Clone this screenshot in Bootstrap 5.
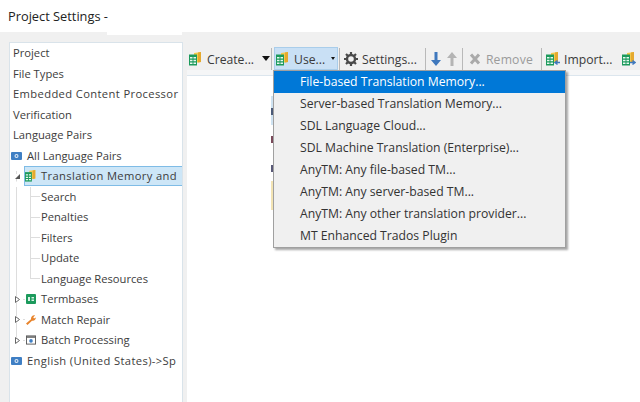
<!DOCTYPE html>
<html>
<head>
<meta charset="utf-8">
<meta name="viewport" content="width=device-width, initial-scale=1">
<link href="https://cdn.jsdelivr.net/npm/bootstrap@5.3.3/dist/css/bootstrap.min.css" rel="stylesheet" crossorigin="anonymous">
<script src="https://cdn.jsdelivr.net/npm/bootstrap@5.3.3/dist/js/bootstrap.bundle.min.js" crossorigin="anonymous"></script>
<style>
html, body { height: 100%; }
body { background: #f0f0f0; font-family: "Open Sans", "Noto Sans", sans-serif; font-size: 12.2px; color: #333; overflow: hidden; }
.title-bar { height: 32px; background: #fff; padding-left: 8px; font-size: 12.8px; line-height: 33px; color: #222; }
.title-tab { height: 3px; width: 75px; margin-left: 107px; background: #fff; }
.main-area { height: 367px; padding: 7px 0 0 9px; }
.tree-panel { width: 174px; flex: none; height: 100%; background: #fff; border: 1px solid #d9e3ea; border-bottom: 0; overflow: hidden; white-space: nowrap; font-size: 11.2px; }
.tree-row { height: 20.53px; line-height: 20.5px; display: flex; align-items: center; color: #3c3c3c; }
.wide-text { letter-spacing: .37px; }
.lv0 { padding-left: 3px; }
.lv0i { padding-left: 1px; }
.lv0i svg { margin-right: 5px; }
.lv1 { padding-left: 1px; background: linear-gradient(#ddd,#ddd) 6px 0/1px 100% no-repeat, linear-gradient(#ddd,#ddd) 12px 50%/3px 1px no-repeat; }
.lv1-end { background: linear-gradient(#ddd,#ddd) 6px 0/1px 50% no-repeat, linear-gradient(#ddd,#ddd) 12px 50%/3px 1px no-repeat; }
.lv1-sel { padding-left: 1px; background: linear-gradient(#ddd,#ddd) 6px 50%/1px 50% no-repeat; }
.lv2 { padding-left: 31px; background: linear-gradient(#ddd,#ddd) 6px 0/1px 100% no-repeat, linear-gradient(#ddd,#ddd) 20px 0/1px 100% no-repeat, linear-gradient(#ddd,#ddd) 20px 50%/10px 1px no-repeat; }
.lv2-last { background: linear-gradient(#ddd,#ddd) 6px 0/1px 100% no-repeat, linear-gradient(#ddd,#ddd) 20px 0/1px 50% no-repeat, linear-gradient(#ddd,#ddd) 20px 50%/10px 1px no-repeat; }
.exp { width: 12px; flex: none; display: flex; justify-content: center; font-size: 0; background: #fff; }
.sel-box { flex: 1; height: 20px; margin-left: 1px; background: #cde6f7; border: 1px solid #7fbce6; border-right: 0; display: flex; align-items: center; }
.sel-box svg { margin-right: 4px; }
.icon-gap { margin: 0 5px 0 3px; flex: none; }
.right-pane { flex: 1; min-width: 0; padding-left: 4px; display: flex; flex-direction: column; }
.tool-strip { height: 23px; margin-top: 5px; padding-left: 2px; display: flex; align-items: center; white-space: nowrap; color: #3a3a3a; font-size: 12.2px; position: relative; }
.tool-btn { display: flex; align-items: center; height: 23px; flex: none; }
.tool-btn svg { flex: none; }
.tool-lbl { padding-top: 3px; }
.lbl-pad { padding-right: 2px; }
.use-btn { background: #c9e0f5; border: 1px solid #a9cdea; width: 64px; margin-left: 2px; padding-left: 1px; }
.muted-btn { color: #9b9b9b; letter-spacing: .2px; }
.tool-sep { width: 1px; height: 22px; background: #b9b9b9; flex: none; }
.sep-near { margin-left: 1px; }
.caret-big { width: 0; height: 0; border: 4px solid transparent; border-top: 5px solid #111; border-bottom: 0; }
.caret-small { width: 0; height: 0; border: 2.5px solid transparent; border-top: 3px solid #111; border-bottom: 0; margin-left: 6px; }
.strip-band { height: 5px; flex: none; background: #f5f6f7; }
.content-pane { flex: 1; background: #fff; border-top: 1px solid #dce6ee; padding: 20px 0 0 84px; }
.tm-menu { position: absolute; left: 86px; top: 23px; width: 293px; margin: 0; padding: 0; background: #f0f0f0; border: 1px solid #a0a0a0; border-radius: 0; box-shadow: 2px 2px 2px rgba(0,0,0,.35); font-size: 12.2px; --bs-dropdown-min-width: 0; }
.tm-menu .dropdown-item { height: 22px; line-height: 22px; padding: 0 0 0 26px; color: #333; }
.tm-menu .dropdown-item.active { background: #0078d7; color: #fff; }
</style>
</head>
<body>
<svg width="0" height="0" class="d-block">
  <defs>
    <symbol id="tm" viewBox="0 0 14 14">
      <path d="M5 1l7-1v10l-7 1z" fill="#f2c94c"/>
      <path d="M9 .5l3-.5v10l-3 .5z" fill="#e5a92e"/>
      <rect x="0" y="2.500" width="8" height="11" fill="#1c9a5c"/>
      <path d="M1 5h2.500v1.500H1zM4.500 5H7v1.500H4.500zM1 7.800h2.500v1.500H1zM4.500 7.800H7v1.500H4.500zM1 10.600h2.500v1.500H1zM4.500 10.600H7v1.500H4.500z" fill="#e8f7ef"/>
    </symbol>
    <symbol id="pair" viewBox="0 0 11 8">
      <rect width="11" height="8" rx="1" fill="#3f7fc4"/>
      <circle cx="5.500" cy="4" r="2" fill="#dfeaf6"/>
      <circle cx="5.500" cy="4" r=".9" fill="#3f7fc4"/>
    </symbol>
  </defs>
</svg>

<div class="title-bar">Project Settings -</div>
<div class="title-tab"></div>

<div class="main-area d-flex">
  <div class="tree-panel">
    <div class="tree-row lv0">Project</div>
    <div class="tree-row lv0">File Types</div>
    <div class="tree-row lv0 wide-text">Embedded Content Processor</div>
    <div class="tree-row lv0">Verification</div>
    <div class="tree-row lv0">Language Pairs</div>
    <div class="tree-row lv0i"><svg width="11" height="8"><use href="#pair"/></svg>All Language Pairs</div>
    <div class="tree-row lv1-sel">
      <span class="exp"><svg width="5" height="5" viewBox="0 0 5 5"><path d="M5 0v5H0z" fill="#555"/></svg></span>
      <span class="sel-box wide-text"><svg width="12" height="12"><use href="#tm"/></svg>Translation Memory and</span>
    </div>
    <div class="tree-row lv2">Search</div>
    <div class="tree-row lv2">Penalties</div>
    <div class="tree-row lv2">Filters</div>
    <div class="tree-row lv2">Update</div>
    <div class="tree-row lv2 lv2-last">Language Resources</div>
    <div class="tree-row lv1">
      <span class="exp"><svg width="5" height="7" viewBox="0 0 5 7"><path d="M.5.500l4 3-4 3z" fill="#fff" stroke="#666"/></svg></span>
      <svg class="icon-gap" width="10" height="10" viewBox="0 0 10 10"><rect width="10" height="10" rx="1" fill="#1c9a5c"/><path d="M2 3h2v4H2zM5.500 3H8v1.500H5.500zM5.500 5.500H8V7H5.500z" fill="#d9f2e5"/></svg>Termbases
    </div>
    <div class="tree-row lv1">
      <span class="exp"><svg width="5" height="7" viewBox="0 0 5 7"><path d="M.5.500l4 3-4 3z" fill="#fff" stroke="#666"/></svg></span>
      <svg class="icon-gap" width="10" height="10" viewBox="0 0 10 10"><path d="M0 8.500L5 4.200C4.700 2 6.500 0 9 .4L7.300 2.200 8 3.400l1.800-.8C10 4.800 8 6.300 6 5.700L1.500 10z" fill="#e8842c"/></svg>Match Repair
    </div>
    <div class="tree-row lv1 lv1-end">
      <span class="exp"><svg width="5" height="7" viewBox="0 0 5 7"><path d="M.5.500l4 3-4 3z" fill="#fff" stroke="#666"/></svg></span>
      <svg class="icon-gap" width="10" height="10" viewBox="0 0 11 10"><rect x=".5" y=".5" width="10" height="9" fill="#fff" stroke="#555"/><rect x="1" y="1" width="9" height="1.500" fill="#555"/><circle cx="5.500" cy="6" r="2" fill="#3f7fc4"/></svg>Batch Processing
    </div>
    <div class="tree-row lv0i wide-text"><svg width="11" height="8"><use href="#pair"/></svg>English (United States)-&gt;Sp</div>
  </div>

  <div class="right-pane">
    <div class="tool-strip">
      <div class="tool-btn"><svg class="me-1" width="14" height="14"><use href="#tm"/></svg><span class="tool-lbl">Create...</span></div>
      <div class="caret-big ms-2"></div>
      <div class="tool-sep sep-near"></div>
      <div class="tool-btn use-btn"><svg class="me-1" width="14" height="14"><use href="#tm"/></svg><span class="tool-lbl">Use...</span><span class="caret-small"></span></div>
      <div class="tool-sep sep-near"></div>
      <div class="tool-btn ms-1">
        <svg class="me-1" width="14" height="14" viewBox="0 0 14 14"><circle cx="7" cy="7" r="4" fill="none" stroke="#4a4a4a" stroke-width="2.400"/><path d="M7 0v3M7 11v3M0 7h3M11 7h3M2 2l2 2M10 10l2 2M12 2l-2 2M4 10l-2 2" stroke="#4a4a4a" stroke-width="2.200"/></svg><span class="tool-lbl">Settings...</span>
      </div>
      <div class="tool-sep ms-2"></div>
      <div class="tool-btn ms-1"><svg width="12" height="14" viewBox="0 0 12 14"><path d="M4.500 0h3v8H11l-5 6-5-6h3.500z" fill="#3f78bd"/></svg></div>
      <div class="tool-btn ms-1"><svg width="12" height="14" viewBox="0 0 12 14"><path d="M4.500 14h3V6H11L6 0 1 6h3.500z" fill="#b4b4b4"/></svg></div>
      <div class="tool-sep ms-1"></div>
      <div class="tool-btn ms-1 muted-btn"><svg class="me-1" width="15" height="12" viewBox="0 0 15 12"><path d="M4 1.500l8 9M12 1.500l-8 9" stroke="#aaa" stroke-width="3"/></svg><span class="tool-lbl">Remove</span></div>
      <div class="tool-sep ms-2"></div>
      <div class="tool-btn ms-1"><svg class="me-1" width="14" height="14" viewBox="0 0 14 14"><use href="#tm" width="14" height="14"/><path d="M14 10.500H9.500M11.500 8.500l-2.500 2 2.500 2" fill="none" stroke="#3f78bd" stroke-width="1.500"/></svg><span class="tool-lbl lbl-pad">Import...</span></div>
      <div class="tool-btn ms-2"><svg width="14" height="14" viewBox="0 0 14 14"><use href="#tm" width="14" height="14"/><path d="M8 10.500h4.500M10.500 8.500l2.500 2-2.500 2" fill="none" stroke="#3f78bd" stroke-width="1.500"/></svg></div>

      <div class="dropdown-menu show tm-menu">
        <a class="dropdown-item active" href="#">File-based Translation Memory...</a>
        <a class="dropdown-item" href="#">Server-based Translation Memory...</a>
        <a class="dropdown-item" href="#">SDL Language Cloud...</a>
        <a class="dropdown-item" href="#">SDL Machine Translation (Enterprise)...</a>
        <a class="dropdown-item" href="#">AnyTM: Any file-based TM...</a>
        <a class="dropdown-item" href="#">AnyTM: Any server-based TM...</a>
        <a class="dropdown-item" href="#">AnyTM: Any other translation provider...</a>
        <a class="dropdown-item" href="#">MT Enhanced Trados Plugin</a>
      </div>
    </div>
    <div class="strip-band"></div>
    <div class="content-pane">
      <svg class="d-block" width="2" height="115" viewBox="0 0 2 115">
        <rect y="0" width="2" height="29" fill="#cfe3f2"/>
        <rect y="12" width="2" height="7" fill="#4a5a78"/>
        <rect y="40" width="2" height="7" fill="#7a4a5a"/>
        <rect y="69" width="2" height="7" fill="#5a5a78"/>
        <rect y="85" width="2" height="29" fill="#f3e4b4"/>
      </svg>
    </div>
  </div>
</div>
</body>
</html>
